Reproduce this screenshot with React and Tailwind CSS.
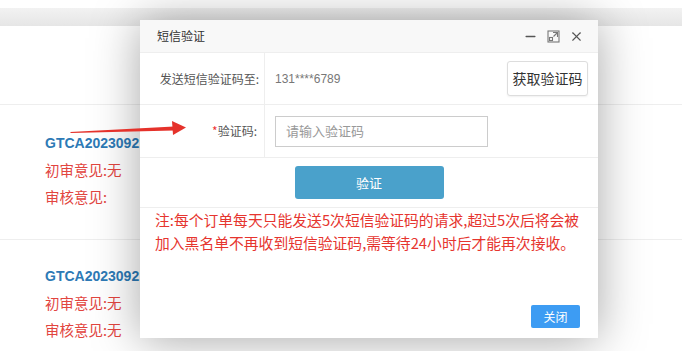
import { Minus, X } from "lucide-react";

const cjk = { fontFamily: '"Noto Sans CJK SC", "Liberation Sans", sans-serif' };
const latin = { fontFamily: '"Liberation Sans", "Noto Sans CJK SC", sans-serif' };

const orders = [
    { no: "GTCA20230921001", first: "初审意见:无", audit: "审核意见:" },
    { no: "GTCA20230921002", first: "初审意见:无", audit: "审核意见:无" },
];

function MaximizeIcon() {
    return (
        <svg width="13" height="13" viewBox="0 0 13 13" fill="none" stroke="#777" strokeWidth="1.1">
            <rect x="1" y="1" width="11" height="11" />
            <path d="M6 2.5h4.5V7M10.5 2.5L6.5 6.5" />
            <rect x="2.5" y="7.5" width="3" height="3" />
        </svg>
    );
}

function Arrow() {
    return (
        <svg
            className="absolute left-[66px] top-[118px]"
            width="124"
            height="20"
            viewBox="0 0 124 20"
        >
            <polygon points="4,14 108,8.5 108,12.5 5,15" fill="#e5322b" />
            <polygon points="106,3 120,9.5 107,17" fill="#e5322b" />
        </svg>
    );
}

function SmsDialog() {
    return (
        <div
            className="absolute left-[140px] top-[20px] flex h-[318px] w-[458px] flex-col bg-white shadow-[0_2px_45px_rgba(0,0,0,0.35)]"
            style={cjk}
        >
            {/* header */}
            <div className="flex h-[33px] items-center justify-between border-b border-[#eee] bg-[#f8f8f8] pl-[17px] pr-[14px]">
                <span className="text-[12px] text-[#333]">短信验证</span>
                <div className="flex items-center gap-[9px] text-[#555]">
                    <Minus size={15} strokeWidth={2.2} />
                    <MaximizeIcon />
                    <X size={15} strokeWidth={1.8} />
                </div>
            </div>

            {/* form rows */}
            <div className="flex h-[52px] border-b border-[#eee]">
                <div className="flex w-[125px] items-center justify-end border-r border-[#eee] pr-[5px] text-[12px] text-[#555]">
                    发送短信验证码至:
                </div>
                <div className="flex flex-1 items-center justify-between pl-[10px] pr-[10px]">
                    <span className="text-[12px] text-[#777]" style={latin}>
                        131****6789
                    </span>
                    <button className="h-[35px] w-[81px] rounded-[3px] border border-[#ddd] bg-white text-[14px] text-[#333] shadow-[0_1px_2px_rgba(0,0,0,0.06)]">
                        获取验证码
                    </button>
                </div>
            </div>
            <div className="flex h-[53px] border-b border-[#eee]">
                <div className="flex w-[125px] items-center justify-end border-r border-[#eee] pr-[7px] text-[12px] text-[#555]">
                    <span className="text-[#e33]">*</span>验证码:
                </div>
                <div className="flex flex-1 items-center pl-[10px]">
                    <div className="flex h-[31px] w-[213px] items-center border border-[#ccc] pl-[10px] text-[13px] text-[#999]">
                        请输入验证码
                    </div>
                </div>
            </div>

            <div className="flex h-[50px] items-center justify-center border-b border-[#eee]">
                <button className="h-[33px] w-[149px] rounded-[3px] bg-[#4aa1cb] text-[13px] text-white">
                    验证
                </button>
            </div>

            <div className="px-[15px] text-[14.8px] leading-[23px] text-[#e6352f]">
                <p>注:每个订单每天只能发送5次短信验证码的请求,超过5次后将会被</p>
                <p>加入黑名单不再收到短信验证码,需等待24小时后才能再次接收。</p>
            </div>

            <div className="mt-auto flex justify-end pb-[10px] pr-[18px]">
                <button className="h-[23px] w-[49px] rounded-[2px] bg-[#3d9cf3] text-[12px] text-white">
                    关闭
                </button>
            </div>
        </div>
    );
}

export default function App() {
    return (
        <div className="relative h-[351px] w-[682px] overflow-hidden bg-white" style={cjk}>
            <div className="h-[8px] bg-white" />
            <div className="h-[18px] bg-gradient-to-b from-[#f2f2f2] to-[#e6e6e6]" />
            <div className="h-[79px] border-b border-[#eee]" />

            {orders.map((order, i) => (
                <div
                    key={order.no}
                    className={`flex flex-col pl-[45px] ${
                        i === 0 ? "h-[135px] border-b border-[#eee] pt-[25px]" : "pt-[23px]"
                    }`}
                >
                    <div className="h-[26px] text-[14px] font-bold leading-[26px] text-[#2d7ab6]" style={latin}>
                        {order.no}
                    </div>
                    <div className="h-[27px] text-[14.5px] leading-[27px] text-[#e2453f]">{order.first}</div>
                    <div className="h-[27px] text-[14.5px] leading-[27px] text-[#e2453f]">{order.audit}</div>
                </div>
            ))}

            <SmsDialog />
            <Arrow />
        </div>
    );
}
